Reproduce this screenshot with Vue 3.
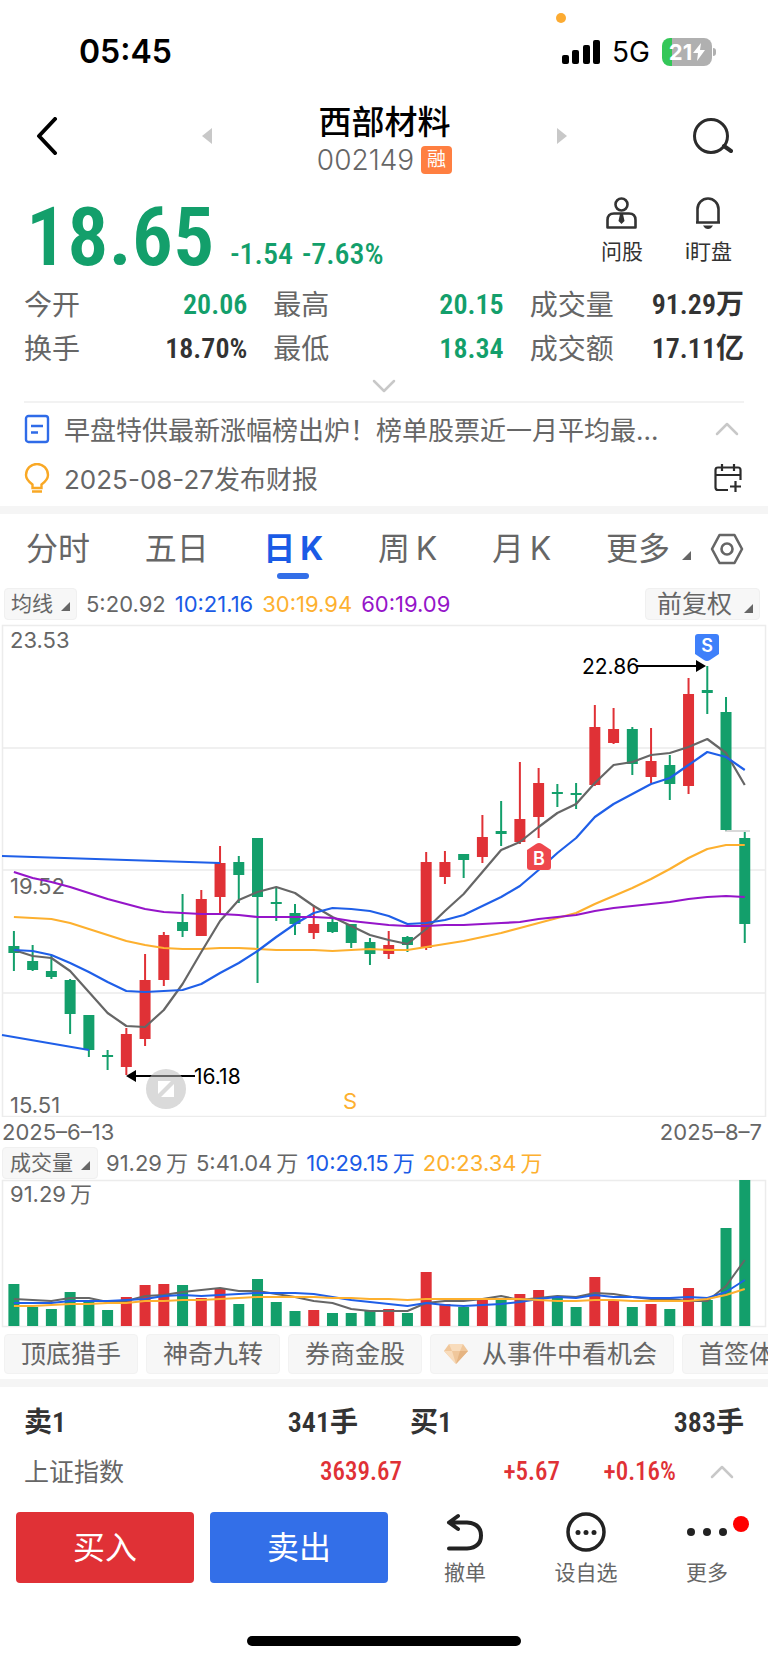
<template>
  <div class="page">
    <div class="status-bar">
      <i class="mic-dot"></i>
      <span class="clock">05:45</span>
      <div class="status-right">
        <svg width="38" height="24" viewBox="0 0 38 24">
          <rect x="0" y="15" width="7" height="9" rx="2" />
          <rect x="10" y="10" width="7" height="14" rx="2" />
          <rect x="21" y="5" width="7" height="19" rx="2" />
          <rect x="31" y="0" width="7" height="24" rx="2" />
        </svg>
        <span class="network">5G</span>
        <div class="battery">
          <span>21</span>
          <svg width="12" height="18" viewBox="0 0 12 18"><path d="M8 0L0 10h5L4 18l8-11H7z" fill="#fff" /></svg>
        </div>
      </div>
    </div>

    <header class="nav">
      <button class="icon-btn back" aria-label="返回">
        <svg width="22" height="38" viewBox="0 0 22 38"><path d="M19 2L3 19l16 17" fill="none" stroke="#000" stroke-width="4" stroke-linecap="round" stroke-linejoin="round" /></svg>
      </button>
      <div class="nav-center">
        <button class="icon-btn" aria-label="上一只">
          <svg width="10" height="16" viewBox="0 0 10 16"><path d="M10 0v16L0 8z" fill="#c8c8c8" /></svg>
        </button>
        <div class="nav-title">
          <h1>西部材料</h1>
          <div class="code">002149<span class="badge">融</span></div>
        </div>
        <button class="icon-btn" aria-label="下一只">
          <svg width="10" height="16" viewBox="0 0 10 16"><path d="M0 0v16l10-8z" fill="#c8c8c8" /></svg>
        </button>
      </div>
      <button class="icon-btn" aria-label="搜索">
        <svg width="40" height="38" viewBox="0 0 40 38" fill="none" stroke="#2b2b2b" stroke-width="3"><circle cx="18" cy="19" r="16.5" /><path d="M31 29l7 5" stroke-width="4" stroke-linecap="round" /></svg>
      </button>
    </header>

    <section class="quote">
      <div class="price-row">
        <div class="price down">18.65</div>
        <div class="change down"><span>-1.54</span><span>-7.63%</span></div>
        <div class="tools">
          <button class="tool">
            <svg width="31" height="32" viewBox="0 0 31 32" fill="none" stroke="#333" stroke-width="2.6">
              <circle cx="15.5" cy="7.5" r="6" />
              <path d="M1.5 30.5V23q0-6.5 6.5-6.5h15q6.5 0 6.5 6.5v7.500z" stroke-linejoin="round" />
              <path d="M14 17h3l1.500 7-3 3-3-3z" fill="#333" stroke="none" />
            </svg>
            <span>问股</span>
          </button>
          <button class="tool">
            <svg width="26" height="32" viewBox="0 0 26 32" fill="none" stroke="#333" stroke-width="2.6">
              <path d="M2.500 25.500V12a10.500 10.500 0 0 1 21 0v13.500M1 25.500h24" />
              <path d="M8 28.500h10q-2 3.500-5 3.500t-5-3.500z" fill="#333" stroke="none" />
            </svg>
            <span>i盯盘</span>
          </button>
        </div>
      </div>
      <dl class="stats">
        <div v-for="s in stats" :key="s.label">
          <dt>{{ s.label }}</dt>
          <dd :class="{ down: s.down }">{{ s.value }}</dd>
        </div>
      </dl>
      <button class="icon-btn expand" aria-label="展开">
        <svg width="24" height="14" viewBox="0 0 24 14"><path d="M2 2l10 10L22 2" fill="none" stroke="#c8c8c8" stroke-width="2.500" stroke-linecap="round" stroke-linejoin="round" /></svg>
      </button>
    </section>

    <section class="news">
      <div class="news-row">
        <svg width="26" height="30" viewBox="0 0 26 30" fill="none" stroke="#2f6be8" stroke-width="2.400"><rect x="2" y="2" width="22" height="26" rx="2.500" /><path d="M7 12h12M7 18.500h7" /></svg>
        <a href="#">早盘特供最新涨幅榜出炉！榜单股票近一月平均最...</a>
        <button class="icon-btn fold" aria-label="收起">
          <svg width="24" height="14" viewBox="0 0 24 14"><path d="M2 12L12 2l10 10" fill="none" stroke="#c8c8c8" stroke-width="2.500" stroke-linecap="round" stroke-linejoin="round" /></svg>
        </button>
      </div>
      <div class="news-row">
        <svg width="26" height="30" viewBox="0 0 26 30" fill="none" stroke="#f9a825" stroke-width="2.400"><path d="M8.500 25v-3.500C5 19 2 16 2 12a11 11 0 0 1 22 0c0 4-3 7-6.500 9.500V25z" /><path d="M8 28.500h10" stroke-width="2.500" /></svg>
        <a href="#">2025-08-27发布财报</a>
        <button class="icon-btn" aria-label="加入日历">
          <svg width="30" height="28" viewBox="0 0 30 28" fill="none" stroke="#2b2b2b" stroke-width="2.200">
            <path d="M14 26H4q-2.500 0-2.500-2.500V6Q1.500 3.500 4 3.500h20q2.500 0 2.500 2.500v10M1.500 11h25M8 0v7M20 0v7M21.500 17v11M16 22.500h11" />
          </svg>
        </button>
      </div>
    </section>

    <nav class="tabs">
      <div class="tab-list">
        <button v-for="t in tabs" :key="t" class="tab" :class="{ active: t === activeTab }" @click="activeTab = t">{{ t }}</button>
        <button class="tab more">更多<i class="corner"></i></button>
      </div>
      <button class="icon-btn" aria-label="设置">
        <svg width="34" height="32" viewBox="0 0 34 32" fill="none" stroke="#666" stroke-width="2.600"><path d="M9.500 2h15L32 16l-7.500 14h-15L2 16z" stroke-linejoin="round" /><circle cx="17" cy="16" r="5.500" /></svg>
      </button>
    </nav>

    <div class="legend">
      <button class="pill">均线<i class="corner"></i></button>
      <span>5:20.92</span>
      <span class="blue">10:21.16</span>
      <span class="orange">30:19.94</span>
      <span class="purple">60:19.09</span>
      <button class="pill adjust">前复权<i class="corner"></i></button>
    </div>

    <div class="chart-box">
      <svg class="chart" viewBox="0 0 768 494">
        <g fill="none" stroke="#ececec" stroke-width="1.500">
          <rect x="2.500" y="2.500" width="763" height="491" />
          <path d="M2 125h764M2 247h764M2 370h764" />
        </g>
        <g class="axis">
          <text x="10" y="25">23.53</text>
          <text x="10" y="271">19.52</text>
          <text x="10" y="490">15.51</text>
        </g>
        <g v-for="(c, i) in candles" :key="i" :fill="c[0] ? red : green">
          <rect :x="xAt(i) - 1" :y="c[3] - 3" width="2" :height="c[4] - c[3]" />
          <rect :x="xAt(i) - 5.5" :y="c[1] - 3" width="11" :height="Math.max(c[2] - c[1], 2)" />
        </g>
        <path d="M725 208h25" stroke="#ccc" stroke-width="1.500" />
        <g fill="none" stroke-width="2.200" stroke-linejoin="round">
          <polyline :points="line(ma30, -3)" stroke="#fdb02f" />
          <polyline :points="line(ma5, -3)" stroke="#666" />
          <polyline :points="line(ma10, -3)" stroke="#1f5fe8" />
          <polyline :points="line(ma60, -3)" stroke="#9515c9" />
          <path d="M2 233L220 240M2 412l87 15" stroke="#1f5fe8" />
        </g>
        <g stroke="#000" stroke-width="2">
          <path d="M637 43h62M134 453h61" />
          <path d="M696 37l10 6-10 6zM136 447l-10 6 10 6z" stroke="none" />
        </g>
        <g class="mark">
          <text x="582" y="51">22.86</text>
          <text x="194" y="461">16.18</text>
        </g>
        <path d="M698 11h18q3 0 3 3v17l-9 6q-3 2-6 0l-9-6V14q0-3 3-3z" fill="#3f80fa" />
        <text class="flag" x="707" y="29">S</text>
        <path d="M530 247h18q3 0 3-3v-17l-9-6q-3-2-6 0l-9 6v17q0 3 3 3z" fill="#ee474d" />
        <text class="flag" x="539" y="242">B</text>
        <text class="signal" x="350" y="486">S</text>
      </svg>
      <button class="icon-btn fullscreen" aria-label="全屏">
        <svg width="40" height="40" viewBox="0 0 40 40"><circle cx="20" cy="20" r="20" fill="#bbb" opacity=".6" /><path d="M12 12h13L12 25zM28 15v13H15z" fill="#fff" /></svg>
      </button>
    </div>

    <div class="dates"><span>2025–6–13</span><span>2025–8–7</span></div>

    <div class="legend volume-legend">
      <button class="pill">成交量<i class="corner"></i></button>
      <span>91.29&thinsp;万</span>
      <span>5:41.04&thinsp;万</span>
      <span class="blue">10:29.15&thinsp;万</span>
      <span class="orange">20:23.34&thinsp;万</span>
    </div>

    <svg class="chart" viewBox="0 0 768 150">
      <rect x="2.500" y="1.500" width="763" height="146" fill="none" stroke="#ececec" stroke-width="1.500" />
      <text class="axis" x="10" y="23">91.29&thinsp;万</text>
      <rect v-for="(v, i) in volumes" :key="i" :x="xAt(i) - 5.5" :y="147 - v" width="11" :height="v" :fill="candles[i][0] ? red : green" />
      <g fill="none" stroke-width="2" stroke-linejoin="round">
        <polyline :points="line(vma5, 0)" stroke="#666" />
        <polyline :points="line(vma10, 0)" stroke="#1f5fe8" />
        <polyline :points="line(vma20, 0)" stroke="#fdb02f" />
      </g>
    </svg>

    <div class="chips">
      <button class="chip">顶底猎手</button>
      <button class="chip">神奇九转</button>
      <button class="chip">券商金股</button>
      <button class="chip gem">
        <svg width="24" height="22" viewBox="0 0 24 22"><path d="M5 1h14l5 7-12 13L0 8z" fill="#f0c79b" /><path d="M5 1h14l-3 7H8zM0 8h8l4 13z" fill="#f8dcbc" /><path d="M24 8h-8l-4 13z" fill="#e5b482" /></svg>
        从事件中看机会
      </button>
      <button class="chip">首签体验</button>
    </div>

    <div class="orders">
      <div><b>卖1</b><b>341手</b></div>
      <div><b>买1</b><b>383手</b></div>
    </div>
    <div class="index">
      <span class="name">上证指数</span>
      <b>3639.67</b>
      <b>+5.67</b>
      <b>+0.16%</b>
      <button class="icon-btn" aria-label="展开指数">
        <svg width="24" height="14" viewBox="0 0 24 14"><path d="M2 12L12 2l10 10" fill="none" stroke="#c8c8c8" stroke-width="2.500" stroke-linecap="round" stroke-linejoin="round" /></svg>
      </button>
    </div>

    <footer class="actions">
      <button class="trade buy">买入</button>
      <button class="trade sell">卖出</button>
      <div class="action-list">
        <button class="action">
          <svg width="38" height="40" viewBox="0 0 38 40" fill="none" stroke="#222" stroke-width="4" stroke-linecap="round" stroke-linejoin="round"><path d="M12 4L3 10.500l9 6.500M3 10.500h18q14 1 14 13t-14 13H3" /></svg>
          <span>撤单</span>
        </button>
        <button class="action">
          <svg width="40" height="40" viewBox="0 0 40 40"><circle cx="20" cy="20" r="18" fill="none" stroke="#222" stroke-width="3.500" /><g fill="#222"><circle cx="12" cy="20.500" r="2.500" /><circle cx="20" cy="20.500" r="2.500" /><circle cx="28" cy="20.500" r="2.500" /></g></svg>
          <span>设自选</span>
        </button>
        <button class="action">
          <svg width="40" height="40" viewBox="0 0 40 40" fill="#222"><circle cx="4" cy="20" r="4" /><circle cx="20" cy="20" r="4" /><circle cx="36" cy="20" r="4" /></svg>
          <span>更多</span>
          <i class="red-dot"></i>
        </button>
      </div>
    </footer>
    <div class="home-indicator"></div>
  </div>
</template>

<script setup>
import { ref } from 'vue';

const red = '#e03136';
const green = '#139f6b';

const stats = [
  { label: '今开', value: '20.06', down: true },
  { label: '最高', value: '20.15', down: true },
  { label: '成交量', value: '91.29万' },
  { label: '换手', value: '18.70%' },
  { label: '最低', value: '18.34', down: true },
  { label: '成交额', value: '17.11亿' },
];

const tabs = ['分时', '五日', '日\u2009K', '周\u2009K', '月\u2009K'];
const activeTab = ref(tabs[2]);

// [rising, body top, body bottom, high, low]
const candles = [
  [0, 326, 333, 311, 351], [0, 341, 350, 325, 351], [0, 351, 357, 335, 359], [0, 360, 394, 359, 414],
  [0, 395, 430, 395, 437], [0, 435, 437, 430, 450], [1, 414, 447, 408, 455], [1, 360, 419, 334, 426],
  [1, 315, 360, 312, 366], [0, 302, 311, 274, 317], [1, 279, 316, 270, 316], [1, 243, 277, 226, 295],
  [0, 242, 255, 236, 283], [0, 218, 277, 218, 363], [0, 282, 283, 268, 301], [0, 293, 304, 284, 315],
  [1, 304, 313, 285, 319], [0, 302, 312, 298, 313], [0, 304, 323, 304, 328], [0, 322, 334, 318, 345],
  [1, 325, 334, 311, 339], [0, 317, 325, 316, 332], [1, 242, 328, 232, 330], [1, 242, 257, 231, 264],
  [0, 234, 240, 234, 258], [1, 217, 237, 195, 243], [0, 211, 214, 181, 226], [1, 199, 222, 142, 224],
  [1, 163, 197, 148, 218], [0, 172, 173, 164, 187], [0, 173, 174, 163, 189], [1, 107, 165, 85, 166],
  [1, 109, 123, 88, 124], [0, 109, 144, 107, 155], [1, 141, 157, 108, 163], [0, 145, 164, 135, 180],
  [1, 74, 166, 58, 174], [0, 70, 73, 46, 94], [0, 92, 210, 77, 211], [0, 218, 304, 212, 323],
];

const ma5 = [330, 336, 338, 351, 372, 393, 406, 407, 390, 364, 332, 301, 280, 272, 267, 273, 286, 297, 306, 315, 320, 324, 309, 291, 274, 252, 230, 222, 207, 193, 184, 163, 145, 142, 135, 133, 127, 119, 133, 165];
const ma10 = [330, 331, 335, 343, 352, 362, 371, 372, 371, 370, 364, 353, 343, 331, 317, 304, 293, 288, 289, 291, 296, 304, 303, 300, 295, 286, 277, 266, 250, 233, 218, 197, 184, 174, 164, 158, 145, 132, 137, 150];
const ma30 = [297, 298, 299, 303, 309, 315, 321, 325, 328, 329, 329, 328, 328, 329, 330, 330, 330, 331, 330, 329, 330, 330, 327, 324, 321, 317, 313, 308, 303, 298, 293, 284, 276, 268, 259, 249, 238, 229, 225, 225];
const ma60 = [252, 258, 262, 267, 273, 279, 284, 289, 292, 293, 294, 294, 295, 297, 297, 297, 297, 298, 301, 303, 305, 306, 306, 305, 305, 304, 303, 302, 299, 297, 295, 291, 288, 286, 284, 282, 279, 277, 276, 277];

const volumes = [42, 19, 17, 34, 24, 16, 29, 41, 42, 41, 28, 38, 22, 47, 24, 15, 16, 13, 13, 16, 17, 13, 54, 22, 19, 26, 26, 32, 36, 28, 19, 49, 26, 19, 22, 17, 38, 26, 98, 146];
const vma5 = [120, 121, 122, 119, 119, 123, 122, 117, 116, 113, 111, 109, 112, 112, 115, 118, 122, 124, 130, 132, 132, 132, 124, 122, 122, 120, 117, 121, 119, 117, 118, 114, 115, 118, 120, 120, 122, 122, 107, 81];
const vma10 = [124, 124, 124, 122, 122, 122, 121, 120, 117, 116, 117, 116, 115, 114, 114, 114, 115, 118, 121, 123, 125, 127, 124, 126, 127, 126, 125, 123, 120, 118, 119, 116, 118, 118, 119, 119, 118, 119, 113, 101];
const vma20 = [127, 127, 126, 125, 125, 124, 124, 122, 122, 121, 121, 120, 119, 118, 118, 118, 118, 119, 119, 120, 120, 121, 120, 120, 120, 120, 120, 120, 121, 122, 122, 121, 121, 122, 122, 122, 122, 120, 116, 110];

const xAt = (i) => 13.9 + i * 18.74;
const line = (values, dy) => values.map((v, i) => `${xAt(i)},${v + dy}`).join(' ');
</script>

<style>
body {
  margin: 0;
  background: #fff;
}
</style>

<style scoped>
.page {
  overflow: hidden;
  background: #fff;
  color: #666;
  font-family: Inter, "Noto Sans CJK SC", sans-serif;
}

button {
  margin: 0;
  padding: 0;
  border: 0;
  background: none;
  color: inherit;
  font: inherit;
}

a {
  color: inherit;
  text-decoration: none;
}

svg {
  display: block;
  flex: none;
}

.down {
  color: #139f6b;
}

.blue {
  color: #1a5be6;
}

.orange {
  color: #fdb02f;
}

.purple {
  color: #9515c9;
}

.icon-btn {
  flex: none;
}

.status-bar {
  position: relative;
  display: flex;
  align-items: center;
  justify-content: space-between;
  padding: 32px 56px 8px 79px;
  color: #000;
}

.mic-dot {
  position: absolute;
  top: 13px;
  left: 73%;
  width: 10px;
  height: 10px;
  margin-left: -5px;
  border-radius: 50%;
  background: #fcab32;
}

.clock {
  font-size: 32px;
  font-weight: 600;
  line-height: 40px;
}

.status-right {
  display: flex;
  align-items: center;
  gap: 12px;
}

.network {
  font-size: 28px;
  font-weight: 400;
  line-height: 32px;
}

.battery {
  position: relative;
  display: flex;
  align-items: center;
  justify-content: center;
  gap: 1px;
  width: 50px;
  height: 28px;
  border-radius: 8px;
  background: linear-gradient(90deg, #34c759 21%, #b0b0b0 21%);
  color: #fff;
  font-size: 22px;
  font-weight: 700;
}

.battery::after {
  content: "";
  position: absolute;
  top: 10px;
  right: -4px;
  width: 3px;
  height: 8px;
  border-radius: 0 3px 3px 0;
  background: #b0b0b0;
}

.nav {
  display: flex;
  align-items: center;
  justify-content: space-between;
  padding: 14px 35px 0 36px;
}

.back {
  width: 40px;
}

.nav-center {
  display: flex;
  align-items: center;
  justify-content: space-between;
  width: 366px;
}

.nav-title {
  padding-top: 8px;
  text-align: center;
}

h1 {
  margin: 0;
  color: #000;
  font-size: 33px;
  font-weight: 500;
  line-height: 40px;
}

.code {
  display: flex;
  align-items: center;
  gap: 7px;
  font-size: 28px;
  font-weight: 300;
  line-height: 36px;
}

.badge {
  padding: 0 6px;
  border-radius: 4px;
  background: #ff7f41;
  color: #fff;
  font-size: 19px;
  font-weight: 400;
  line-height: 28px;
}

.quote {
  margin: 0 24px;
  border-bottom: 2px solid #f2f2f2;
}

.price-row {
  display: flex;
  align-items: flex-end;
  padding-top: 16px;
}

.price,
.change,
dd,
.index b,
.orders b {
  font-family: "Roboto Condensed", Roboto, "Noto Sans CJK SC", sans-serif;
  font-weight: 700;
}

.price {
  margin-left: 2px;
  font-size: 82px;
  font-weight: 600;
  line-height: 86px;
}

.change {
  display: flex;
  gap: 9px;
  margin-left: 16px;
  font-size: 30px;
  font-weight: 500;
  line-height: 52px;
}

.tools {
  display: flex;
  gap: 42px;
  margin-left: auto;
  padding: 0 12px 13px 0;
}

.tool,
.action {
  display: flex;
  flex-direction: column;
  align-items: center;
  gap: 8px;
  color: #333;
  font-size: 21px;
  line-height: 30px;
}

.stats {
  display: grid;
  grid-template-columns: 223fr 230fr 214fr;
  gap: 4px 26px;
  margin: 5px 0 0;
}

.stats div {
  display: flex;
  justify-content: space-between;
}

dt,
dd {
  margin: 0;
  font-size: 28px;
  line-height: 40px;
}

dd {
  font-weight: 600;
}

dd:not(.down) {
  color: #333;
}

.expand {
  display: block;
  margin: 10px auto 8px;
}

.news {
  padding: 1px 24px 4px;
  border-bottom: 8px solid #f5f5f5;
}

.news-row {
  display: flex;
  align-items: center;
  height: 49px;
}

.news-row a {
  flex: 1;
  margin-left: 14px;
  font-size: 26px;
  white-space: nowrap;
}

.fold {
  margin-right: 5px;
}

.tabs {
  display: flex;
  align-items: center;
  justify-content: space-between;
  padding: 0 24px 0 26px;
}

.tab-list {
  display: flex;
  flex: 1;
  justify-content: space-between;
  margin-right: 19px;
}

.tab {
  position: relative;
  font-size: 32px;
  line-height: 70px;
}

.tab.active {
  color: #1a5be6;
  font-weight: 700;
}

.tab.active::after {
  content: "";
  position: absolute;
  bottom: 5px;
  left: 50%;
  width: 32px;
  height: 6px;
  margin-left: -16px;
  border-radius: 3px;
  background: #336fe8;
}

.corner {
  display: inline-block;
  margin-left: 8px;
  border-bottom: 9px solid #666;
  border-left: 9px solid transparent;
}

.tab .corner {
  margin-left: 12px;
}

.legend {
  display: flex;
  align-items: center;
  gap: 9px;
  padding: 4px 8px 3px 4px;
  font-size: 22px;
  line-height: 30px;
}

.pill {
  padding: 0 6px;
  border: 1px solid #f0f0f0;
  border-radius: 4px;
  background: #f7f7f7;
  font-size: 21px;
  line-height: 30px;
}

.adjust {
  margin-left: auto;
  padding: 0 6px 0 11px;
  font-size: 25px;
}

.adjust .corner {
  margin-left: 12px;
}

.chart-box {
  position: relative;
}

.chart {
  width: 100%;
  height: auto;
  font-family: Inter, "Noto Sans CJK SC", sans-serif;
}

.axis {
  fill: #666;
  font-size: 22px;
}

.mark {
  fill: #000;
  font-size: 21px;
}

.flag {
  fill: #fff;
  font-size: 18px;
  font-weight: 600;
  text-anchor: middle;
}

.signal {
  fill: #fdb02f;
  font-size: 22px;
  text-anchor: middle;
}

.fullscreen {
  position: absolute;
  bottom: 8px;
  left: 19%;
  opacity: 0.9;
}

.dates {
  display: flex;
  justify-content: space-between;
  padding: 0 6px 0 2px;
  font-size: 22px;
  line-height: 30px;
}

.volume-legend {
  gap: 8px;
  padding: 0 8px 0 2px;
}

.volume-legend .pill {
  padding: 0 7px;
}

.chips {
  display: flex;
  gap: 8px;
  padding: 5px 0 5px 4px;
  overflow: hidden;
  border-bottom: 8px solid #f5f5f5;
}

.chip {
  display: flex;
  flex: none;
  align-items: center;
  gap: 14px;
  padding: 0 16px;
  border: 1px solid #f2f2f2;
  border-radius: 4px;
  background: #f7f7f7;
  font-size: 25px;
  line-height: 38px;
}

.gem {
  padding-left: 13px;
}

.orders {
  display: grid;
  grid-template-columns: 334fr 334fr;
  gap: 52px;
  padding: 16px 24px 9px;
  color: #333;
  font-size: 28px;
  line-height: 40px;
}

.orders b {
  font-weight: 600;
}

.orders div {
  display: flex;
  justify-content: space-between;
}

.index {
  display: grid;
  grid-template-columns: auto 1fr 158px 116px 58px;
  align-items: center;
  padding: 0 34px 0 24px;
  font-size: 25px;
  line-height: 40px;
}

.index b {
  color: #e03136;
  font-weight: 500;
  text-align: right;
}

.index .icon-btn {
  justify-self: end;
}

.actions {
  display: flex;
  align-items: center;
  gap: 16px;
  padding: 14px 16px 0;
}

.trade {
  width: 178px;
  border-radius: 4px;
  color: #fff;
  font-size: 32px;
  line-height: 71px;
}

.buy {
  background: #e03136;
}

.sell {
  background: #336fe8;
}

.action-list {
  display: flex;
  flex: 1;
  justify-content: space-between;
  padding: 6px 24px 0 40px;
}

.action {
  position: relative;
  gap: 6px;
  color: #666;
}

.red-dot {
  position: absolute;
  top: 4px;
  right: -21px;
  width: 16px;
  height: 16px;
  border-radius: 50%;
  background: #f00;
}

.home-indicator {
  width: 274px;
  height: 10px;
  margin: 48px auto 17px;
  border-radius: 5px;
  background: #000;
}
</style>
